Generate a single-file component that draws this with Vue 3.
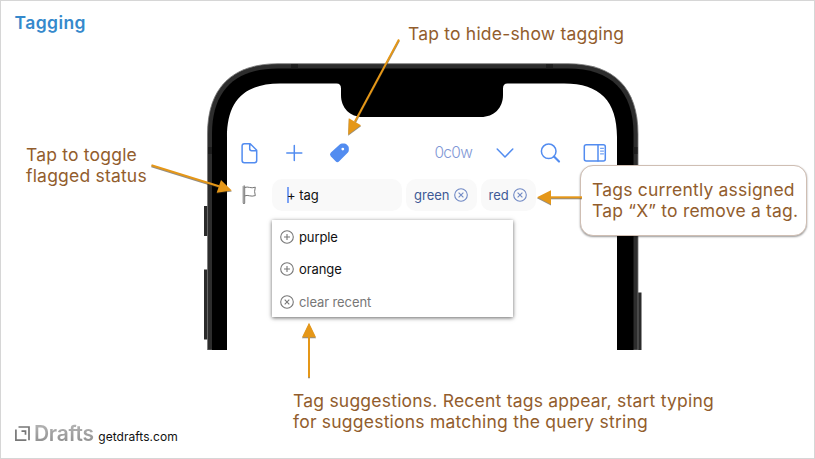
<script setup>
const suggestions = [
  { label: 'purple', kind: 'add' },
  { label: 'orange', kind: 'add' },
  { label: 'clear recent', kind: 'clear' },
]
const assigned = ['green', 'red']
const arrows = [
  { line: 'M399 39.5L355 121.5', head: '348.2,134.8 348.8,118.3 361,125.2' },
  { line: 'M151.5 165.2L219 186.2', head: '231.8,190.6 221,180 216.7,192.8' },
  { line: 'M582 197.3H551', head: '537,197.3 551,190.2 551,204.4' },
  { line: 'M309 377.3V337', head: '309,322.7 302,337.2 316,337.2' },
]
</script>

<template>
  <main class="board">
    <h1 class="title">Tagging</h1>

    <section class="phone">
      <svg class="frame" width="440" height="290" viewBox="204 60 440 290" fill="none">
        <path d="M203 206h5v30h-5zM203 269.5h5v70h-5zM637.5 292.5h4V350h-4z" fill="#2b2b2b" />
        <path d="M207.5 350V134C207.5 88 232 63.7 278 63.7H568C614 63.7 638 88 638 134V350z" fill="#2d2d2d" stroke="#777" stroke-width=".8" />
        <path d="M212 350V134C212 91 235 68.5 278 68.5H568C611 68.5 633.5 91 633.5 134V350z" fill="#000" />
        <path d="M227 350V137C227 101 244 83.4 280 83.4H336.5Q341 83.4 341 88.5V95C341 108 350 117 363 117H481C494 117 503 108 503 95V88.5Q503 83.4 507.5 83.4H564C600 83.4 617 101 617 137V350z" fill="#fff" />
        <path d="M291 64.2h7v4h-7zM546 64.2h7v4h-7zM208 147h4v7h-4zM633.5 147h4v7h-4z" fill="#1d1d1d" />
      </svg>

      <div class="screen">
        <nav class="toolbar">
          <svg class="icon" viewBox="-0.7 0 24 24"><path d="M6.6 2.8h5.9L19 9.2v10.3q0 2.2-2.2 2.2H6.6q-2.2 0-2.2-2.2V5q0-2.2 2.2-2.2zM12 2.8v5q0 1.9 1.9 1.9H19" /></svg>
          <svg class="icon" viewBox="-0.3 0 24 24"><path d="M12 4.5v15M4.5 12h15" /></svg>
          <svg class="icon" viewBox="-0.4 0 24 24"><path class="solid" fill-rule="evenodd" d="M12.6 3.2Q13.4 2.5 14.6 2.5H17Q18.2 2.5 19 3.3L20.5 4.8Q21.4 5.7 21.4 6.8V9.3Q21.4 10.6 20.5 11.5L11.8 20.3Q10 22 8.2 20.3L3.3 15.2Q1.7 13.4 3.5 11.6zM15.4 6.7a1.4 1.4 0 1 0 0 2.8a1.4 1.4 0 0 0 0-2.8z" /></svg>
          <span class="count">0c0w</span>
          <svg class="icon" viewBox="0 0 24 24"><path d="M4.2 8l7.8 8 7.8-8" /></svg>
          <svg class="icon" viewBox="0 0 24 24"><circle cx="10.7" cy="10.3" r="7.3" /><path d="M16 15.6l5 5" stroke-width="2.1" /></svg>
          <svg class="icon" viewBox="0 0 24 24"><rect x="1.3" y="3.8" width="21" height="16.2" rx="2" /><path d="M15 4v16" /><path d="M17.5 7.3h3M17.5 10.1h3M17.5 12.9h3" stroke-width="1" /></svg>
        </nav>

        <div class="tags">
          <svg class="flag" width="16" height="22" viewBox="0 0 16 22"><path d="M2.2 2.5q.8-1.7 1.5-.3v17q-.7 1.6-1.5 0zM3.7 3.5c3.3-1.6 6 1.5 10.6-.3l-.7 4.3.7 4.1c-4.6 1.7-7.3-1.3-10.6.3" /></svg>
          <div class="field"><i class="caret"></i>+ tag</div>
          <div v-for="tag in assigned" :key="tag" class="chip">
            <span>{{ tag }}</span>
            <svg width="14" height="14" viewBox="0 0 14 14"><circle cx="7" cy="7" r="6.3" /><path d="M4.6 4.6l4.8 4.8M9.4 4.6L4.6 9.4" /></svg>
          </div>
        </div>
      </div>

      <ul class="menu">
        <li v-for="item in suggestions" :key="item.label" :class="item.kind">
          <svg width="14" height="14" viewBox="0 0 14 14">
            <circle cx="7" cy="7" r="6.3" />
            <path v-if="item.kind === 'add'" d="M7 4v6M4 7h6" />
            <path v-else d="M4.7 4.7l4.6 4.6M9.3 4.7L4.7 9.3" />
          </svg>
          <span>{{ item.label }}</span>
        </li>
      </ul>
    </section>

    <p class="note note-toolbar">Tap to hide-show tagging</p>
    <p class="note note-flag">Tap to toggle<br />flagged status</p>
    <p class="note note-menu">Tag suggestions. Recent tags appear, start typing<br />for suggestions matching the query string</p>
    <p class="note note-assigned">Tags currently assigned<br />Tap “X” to remove a tag.</p>

    <svg class="arrows" width="815" height="459" viewBox="0 0 815 459">
      <g v-for="arrow in arrows" :key="arrow.line">
        <path :d="arrow.line" />
        <polygon :points="arrow.head" />
      </g>
    </svg>

    <footer class="brand">
      <svg width="15" height="15" viewBox="0 0 15 15"><path d="M3.5 1H14v13.2M.9 3.5v10.7h10.5M6.5 5.2h4v3.5" /></svg>
      <strong>Drafts</strong>
      <span>getdrafts.com</span>
    </footer>
  </main>
</template>

<style>
body {
  margin: 0;
  background: #fff;
}
</style>

<style scoped>
.board {
  position: relative;
  box-sizing: border-box;
  width: 815px;
  height: 459px;
  overflow: hidden;
  border: 1px solid #d6d6d6;
  background: #fff;
  font-family: Inter, "Liberation Sans", sans-serif;
}
.title {
  margin: 0;
  padding: 11px 0 0 13.5px;
  font-size: 17.5px;
  line-height: 21px;
  font-weight: 600;
  letter-spacing: 0.42px;
  color: #3589cc;
}
.phone {
  position: absolute;
  left: 201px;
  top: 59px;
  width: 440px;
  height: 290px;
}
.frame {
  position: absolute;
  left: 2px;
  top: 0;
  overflow: hidden;
}
.screen {
  position: absolute;
  left: 25px;
  top: 81px;
  width: 390px;
}
.toolbar {
  display: flex;
  align-items: center;
  padding-left: 10px;
}
.icon {
  width: 24px;
  height: 24px;
  flex: none;
  margin-right: 21px;
  fill: none;
  stroke: #528cf0;
  stroke-width: 1.5;
  stroke-linecap: round;
  stroke-linejoin: round;
}
.icon:last-child {
  margin-right: 0;
}
.solid {
  fill: #528cf0;
  stroke: none;
}
.count {
  box-sizing: border-box;
  flex: none;
  width: 120.5px;
  padding-left: 62.5px;
  font-size: 15.5px;
  line-height: 24px;
  font-weight: 300;
  letter-spacing: -0.7px;
  color: #7f98d6;
}
.tags {
  display: flex;
  align-items: center;
  margin-top: 14px;
  font-size: 13px;
}
.flag {
  margin: 0 15px 0 14px;
  fill: none;
  stroke: #666;
  stroke-width: 0.9;
  stroke-linejoin: round;
}
.field,
.chip {
  display: flex;
  align-items: center;
  box-sizing: border-box;
  height: 32px;
  border-radius: 10px;
  background: #f9f9f9;
}
.field {
  width: 130px;
  padding-left: 15px;
  color: #111;
}
.caret {
  width: 2px;
  height: 16px;
  margin-right: -2px;
  background: #7ba2f5;
}
.chip {
  gap: 4px;
  margin-left: 4px;
  padding: 0 9px 0 8px;
  color: #405996;
}
.chip svg {
  fill: none;
  stroke: #6f88c4;
  stroke-width: 1.1;
}
.menu {
  position: absolute;
  left: 70px;
  top: 160px;
  box-sizing: border-box;
  width: 241px;
  margin: 0;
  padding: 1px 0 0 8px;
  height: 97px;
  list-style: none;
  background: #fff;
  box-shadow: 0 1px 4px rgba(0, 0, 0, 0.6);
  font-size: 13px;
  letter-spacing: -0.1px;
  color: #111;
}
.menu li {
  display: flex;
  align-items: center;
  gap: 5px;
  height: 32.3px;
}
.menu .clear {
  color: #777;
}
.menu svg {
  fill: none;
  stroke: #777;
  stroke-width: 1.1;
}
.note {
  position: absolute;
  margin: 0;
  font-size: 17.5px;
  line-height: 21px;
  white-space: nowrap;
  letter-spacing: 0.2px;
  color: #925d2d;
}
.note-toolbar {
  left: 407px;
  top: 22px;
}
.note-flag {
  left: 25px;
  top: 143px;
}
.note-menu {
  left: 292px;
  top: 389px;
  letter-spacing: 0.22px;
}
.note-assigned {
  left: 579px;
  top: 164px;
  box-sizing: border-box;
  width: 227px;
  height: 71px;
  padding: 13px 0 0 11px;
  border: 1.5px solid #cfbeb3;
  border-radius: 13px;
  background: #fff;
  box-shadow: 0 1px 2px rgba(0, 0, 0, 0.4);
}
.arrows {
  position: absolute;
  left: -1px;
  top: -1px;
  fill: #e59718;
  filter: drop-shadow(0 1px 0.5px rgba(60, 50, 30, 0.55));
}
.arrows path {
  fill: none;
  stroke: #e59718;
  stroke-width: 2;
}
.brand {
  position: absolute;
  left: 14px;
  top: 420px;
  display: flex;
  align-items: baseline;
  line-height: 26px;
}
.brand svg {
  width: 15px;
  height: 15px;
  fill: none;
  stroke: #777;
  stroke-width: 1.7;
}
.brand strong {
  margin-left: 4px;
  font-size: 21px;
  font-weight: 600;
  letter-spacing: -0.3px;
  color: transparent;
  background: linear-gradient(#b0b0b0 20%, #929292 80%);
  background-clip: text;
}
.brand span {
  margin-left: 4.5px;
  font-size: 12px;
  letter-spacing: 0.05px;
  color: #111;
}
</style>
